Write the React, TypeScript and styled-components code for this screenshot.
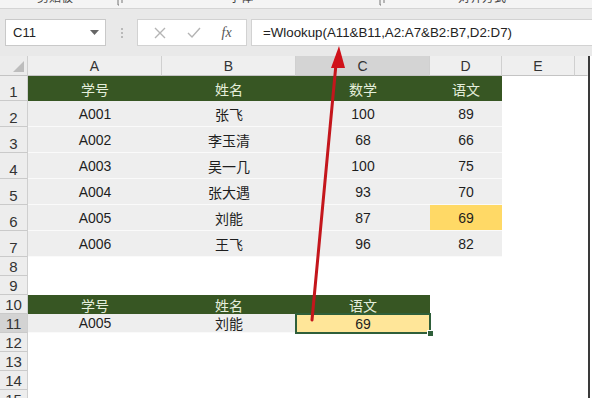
import React from "react";
import styled, { createGlobalStyle, css } from "styled-components";

const GlobalStyle = createGlobalStyle`
  body {
    margin: 0;
    background: #fff;
    font-family: "Liberation Sans", "Noto Sans CJK SC", sans-serif;
  }
  * {
    box-sizing: border-box;
  }
`;

const Frame = styled.div`
  position: relative;
  width: 592px;
  height: 398px;
  overflow: hidden;
  display: flex;
  flex-direction: column;
  background: #fff;
`;

const Ribbon = styled.div`
  height: 9px;
  flex: none;
  display: grid;
  grid-template-columns: 130px 262px 1fr;
  background: #f4f4f4;
  border-bottom: 1px solid #d4d4d4;
  overflow: hidden;
`;

const RibbonGroup = styled.div<{ $shift?: number }>`
  position: relative;
  display: flex;
  justify-content: center;
  padding-right: ${(p) => p.$shift ?? 20}px;
`;

const RibbonLabel = styled.span`
  margin-top: -9px;
  font-size: 12px;
  line-height: 14px;
  color: #444;
  white-space: nowrap;
`;

const Launcher = styled.svg`
  position: absolute;
  right: 4px;
  top: 0;
`;

const FormulaBar = styled.div`
  height: 47px;
  flex: none;
  display: flex;
  align-items: flex-start;
  padding: 10px 0 0 5px;
  background: #e9e9e9;
`;

const NameBox = styled.div`
  width: 101px;
  height: 27px;
  display: flex;
  align-items: center;
  justify-content: space-between;
  padding: 0 6px 0 7px;
  background: #fff;
  border: 1px solid #c9c9c9;
  font-size: 13px;
  color: #222;
`;

const Grip = styled.div`
  width: 31px;
  height: 27px;
  display: flex;
  flex-direction: column;
  align-items: center;
  justify-content: center;
  gap: 2px;
  span {
    width: 2px;
    height: 2px;
    border-radius: 1px;
    background: #a8a8a8;
  }
`;

const ButtonBox = styled.div`
  width: 110px;
  height: 27px;
  display: flex;
  align-items: center;
  justify-content: space-around;
  padding: 0 4px 0 6px;
  background: #fff;
  border: 1px solid #d2d2d2;
`;

const Fx = styled.span`
  font-family: "Liberation Serif", serif;
  font-style: italic;
  font-size: 14px;
  color: #555;
`;

const FormulaInput = styled.div`
  flex: 1;
  height: 27px;
  margin-left: 4px;
  display: flex;
  align-items: center;
  padding-left: 11px;
  background: #fff;
  border: 1px solid #d2d2d2;
  border-right: none;
  font-size: 13.3px;
  color: #222;
  white-space: nowrap;
`;

const SheetRow = styled.div`
  flex: 1;
  display: flex;
`;

const Sheet = styled.div`
  width: 590px;
  display: grid;
  grid-template-columns: 28px 134px 134px 134px 72px 73px 1fr;
  grid-template-rows: 20px 25px repeat(6, 26px) repeat(8, 19px);
  align-content: start;
  border-right: 2px solid #3a3a3a;
`;

const Corner = styled.div`
  position: relative;
  background: #ececec;
  border-right: 1px solid #cfcfcf;
  border-bottom: 1px solid #c4c4c4;
  &::after {
    content: "";
    position: absolute;
    right: 3px;
    bottom: 3px;
    border-style: solid;
    border-width: 0 0 11px 11px;
    border-color: transparent transparent #bdbdbd transparent;
  }
`;

const ColHead = styled.div<{ $active?: boolean; $last?: boolean }>`
  display: flex;
  align-items: flex-end;
  justify-content: center;
  padding-bottom: 1px;
  font-size: 14px;
  color: #333;
  background: ${(p) => (p.$active ? "#d4d4d4" : "#efefef")};
  border-right: 1px solid ${(p) => (p.$last ? "transparent" : "#d0d0d0")};
  border-bottom: 1px solid #c4c4c4;
`;

const RowHead = styled.div<{ $active?: boolean }>`
  display: flex;
  align-items: flex-end;
  justify-content: center;
  font-size: 15px;
  line-height: 17px;
  color: #333;
  background: ${(p) => (p.$active ? "#d3d3d3" : "#ededed")};
  border-right: 1px solid #cfcfcf;
  border-bottom: 1px solid #cacaca;
`;

type Tone = "head" | "data" | "gold" | "pick" | "none";

const Cell = styled.div<{ $tone: Tone }>`
  position: relative;
  display: flex;
  align-items: center;
  justify-content: center;
  font-size: 14px;
  color: #1e1e1e;
  ${(p) =>
    p.$tone === "head" &&
    css`
      background: #375623;
      color: #e4eedb;
    `}
  ${(p) =>
    p.$tone === "data" &&
    css`
      background: #eeeeee;
      border-bottom: 1px solid #fafafa;
    `}
  ${(p) =>
    p.$tone === "gold" &&
    css`
      background: #ffd966;
      border-bottom: 1px solid #fafafa;
    `}
  ${(p) =>
    p.$tone === "pick" &&
    css`
      z-index: 1;
      background: #ffe699;
      box-shadow: 0 0 0 1px #2f5f3a, inset 0 0 0 1px #2f5f3a;
      &::after {
        content: "";
        position: absolute;
        right: -4px;
        bottom: -4px;
        width: 5px;
        height: 5px;
        background: #2f5f3a;
        border: 1px solid #fff;
      }
    `}
`;

const Arrow = styled.svg`
  position: absolute;
  inset: 0;
  pointer-events: none;
  z-index: 5;
`;

const letters = ["A", "B", "C", "D", "E", ""];

const scores: string[][] = [
  ["学号", "姓名", "数学", "语文"],
  ["A001", "张飞", "100", "89"],
  ["A002", "李玉清", "68", "66"],
  ["A003", "吴一几", "100", "75"],
  ["A004", "张大遇", "93", "70"],
  ["A005", "刘能", "87", "69"],
  ["A006", "王飞", "96", "82"],
];

type Row = { cells: [string, Tone][] };

const rows: Row[] = [
  ...scores.map((r, i) => ({
    cells: r.map(
      (v, j): [string, Tone] => [
        v,
        i === 0 ? "head" : i === 5 && j === 3 ? "gold" : "data",
      ]
    ),
  })),
  { cells: [] },
  { cells: [] },
  {
    cells: [
      ["学号", "head"],
      ["姓名", "head"],
      ["语文", "head"],
    ],
  },
  {
    cells: [
      ["A005", "data"],
      ["刘能", "data"],
      ["69", "pick"],
    ],
  },
  { cells: [] },
  { cells: [] },
  { cells: [] },
  { cells: [] },
];

const LauncherIcon = () => (
  <Launcher width="9" height="9" viewBox="0 0 9 9">
    <path d="M1 0v5M1 5h1M5 0v3" stroke="#777" strokeWidth="1" fill="none" />
  </Launcher>
);

const App: React.FC = () => {
  return (
    <Frame>
      <GlobalStyle />
      <Ribbon>
        <RibbonGroup>
          <RibbonLabel>剪贴板</RibbonLabel>
          <LauncherIcon />
        </RibbonGroup>
        <RibbonGroup $shift={40}>
          <RibbonLabel>字体</RibbonLabel>
          <LauncherIcon />
        </RibbonGroup>
        <RibbonGroup>
          <RibbonLabel>对齐方式</RibbonLabel>
        </RibbonGroup>
      </Ribbon>

      <FormulaBar>
        <NameBox>
          <span>C11</span>
          <svg width="9" height="5" viewBox="0 0 9 5">
            <path d="M0 0h9L4.5 5z" fill="#666" />
          </svg>
        </NameBox>
        <Grip>
          <span />
          <span />
          <span />
        </Grip>
        <ButtonBox>
          <svg width="12" height="12" viewBox="0 0 12 12">
            <path d="M1 1l10 10M11 1L1 11" stroke="#b4b4b4" strokeWidth="1.4" />
          </svg>
          <svg width="14" height="12" viewBox="0 0 14 12">
            <path d="M1 6l4 4 8-9" stroke="#b4b4b4" strokeWidth="1.4" fill="none" />
          </svg>
          <Fx>fx</Fx>
        </ButtonBox>
        <FormulaInput>=Wlookup(A11&amp;B11,A2:A7&amp;B2:B7,D2:D7)</FormulaInput>
      </FormulaBar>

      <SheetRow>
        <Sheet>
          <Corner />
          {letters.map((l, i) => (
            <ColHead key={i} $active={l === "C"} $last={i === letters.length - 1}>
              {l}
            </ColHead>
          ))}
          {rows.map((row, r) => (
            <React.Fragment key={r}>
              <RowHead $active={r === 10}>{r + 1}</RowHead>
              {[0, 1, 2, 3, 4, 5].map((c) => {
                const cell = row.cells[c];
                return (
                  <Cell key={c} $tone={cell ? cell[1] : "none"}>
                    {cell ? cell[0] : ""}
                  </Cell>
                );
              })}
            </React.Fragment>
          ))}
        </Sheet>
      </SheetRow>

      <Arrow width="592" height="398" viewBox="0 0 592 398">
        <path
          d="M312 320L336 64"
          stroke="#c4161c"
          strokeWidth="3"
          strokeLinecap="round"
          fill="none"
        />
        <path d="M339 46L331 68L345 68Z" fill="#d0121a" />
      </Arrow>
    </Frame>
  );
};

export default App;
